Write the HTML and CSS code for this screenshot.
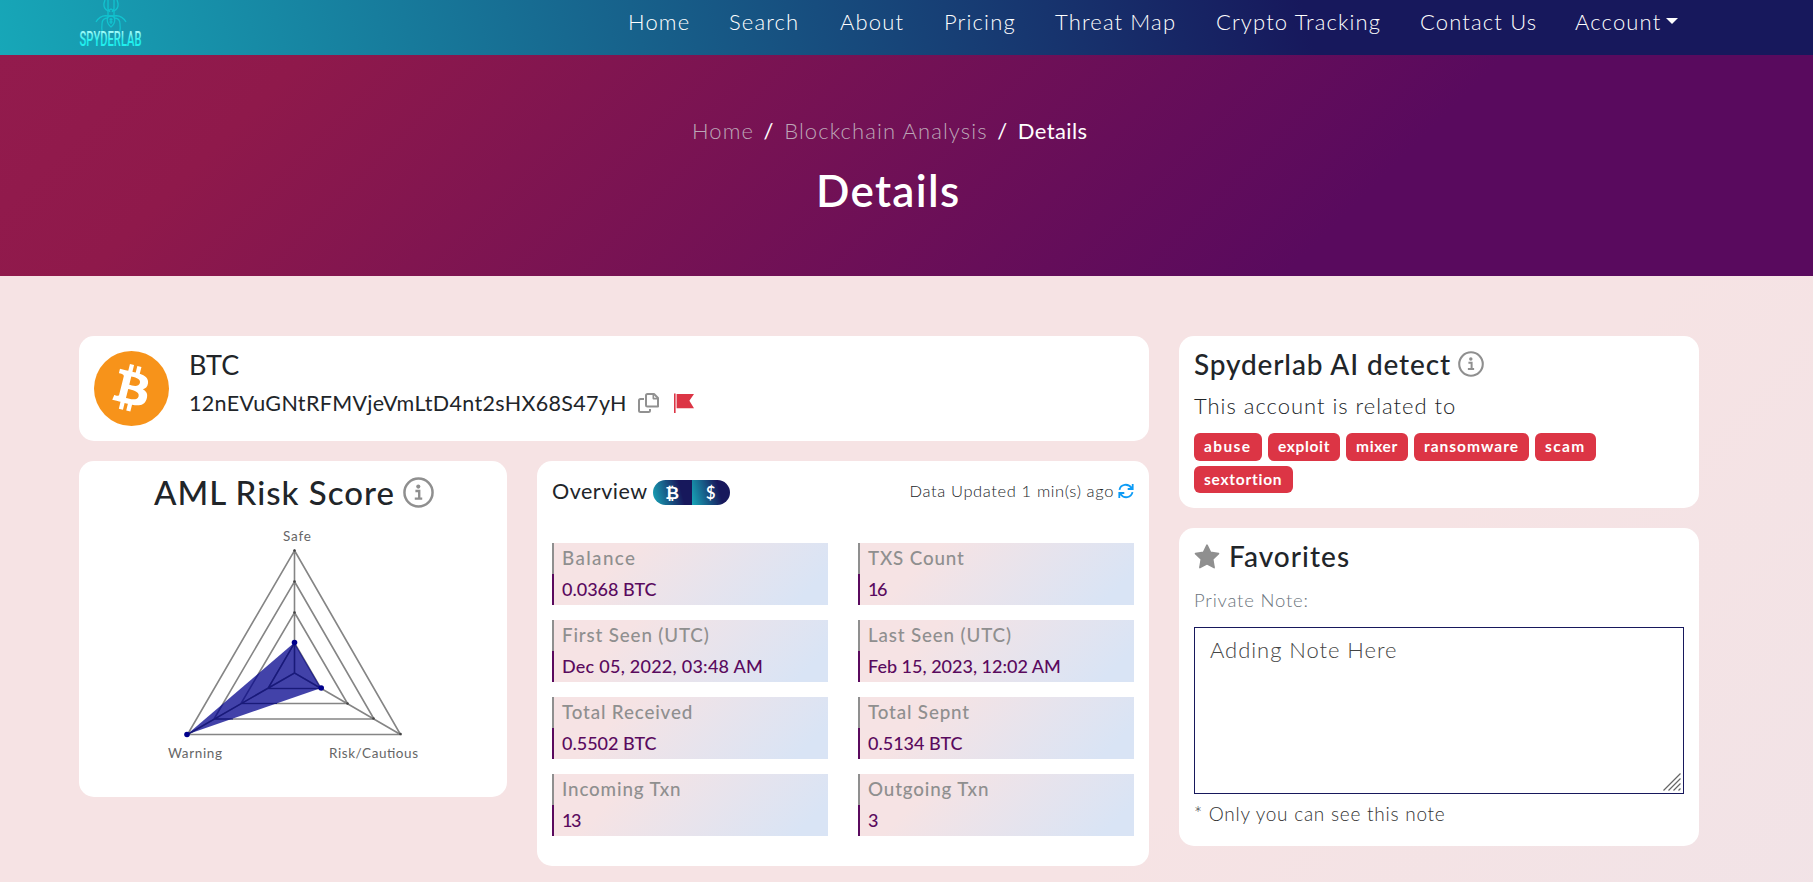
FILE: index.html
```html
<!DOCTYPE html>
<html lang="en">
<head>
<meta charset="utf-8">
<title>Details - Spyderlab</title>
<link rel="stylesheet" href="styles.css">
</head>
<body>
<svg class="sprite" aria-hidden="true">
  <symbol id="info" viewBox="0 0 30 30"><circle cx="15" cy="15" r="13.6" fill="none" stroke="currentColor" stroke-width="2.4"/><circle cx="14.8" cy="9.3" r="2" fill="currentColor"/><path d="M12 13.6h3.7v7M11.4 20.9h7.2" fill="none" stroke="currentColor" stroke-width="2.3"/></symbol>
</svg>
<header class="navbar">
  <a class="logo">
    <svg viewBox="0 0 68 55" width="68" height="55">
      <defs><linearGradient id="lg" x1="0" y1="0" x2="0" y2="1"><stop offset="0" stop-color="#e4ffff"/><stop offset=".6" stop-color="#1ff0ee"/></linearGradient></defs>
      <g fill="none" stroke="#12c3cf" stroke-width="1.3">
        <path d="M26 0c-2 5-1 9 3 11M38 0c2 5 1 9-3 11M29 0v9l2 3M35 0v9l-2 3M29 16c-5-1-9 1-12 6M35 16c5-1 9 1 12 6M29 18c-4 0-6 2-6 6s-1 6 1 9M35 18c4 0 6 2 6 6s1 6-1 9"/>
        <path d="M29 11l3-2 3 2v5h-6z"/><path d="M32 16c-5 0-5 7 0 11 5-4 5-11 0-11z"/><path d="M30.500 19.500h3M30.500 22h3M32 18v6"/>
      </g>
      <text class="logo-text" x="0.500" y="45.500" textLength="62" lengthAdjust="spacingAndGlyphs" fill="url(#lg)">SPYDERLAB</text>
    </svg>
  </a>
  <nav class="menu">
    <a class="n1">Home</a><a class="n2">Search</a><a class="n3">About</a><a class="n4">Pricing</a><a class="n5">Threat Map</a><a class="n6">Crypto Tracking</a><a class="n7">Contact Us</a><a class="n8">Account<i class="caret"></i></a>
  </nav>
</header>
<section class="hero">
  <div class="crumbs"><a>Home</a><span>/</span><a>Blockchain Analysis</a><span>/</span><b>Details</b></div>
  <h1>Details</h1>
</section>
<main class="container">
  <div class="left">
    <section class="card coin">
      <svg class="btc" viewBox="0 0 64 64"><circle cx="32" cy="32" r="32" fill="#f7931a"/><path fill="#fff" d="M46.103 27.444c.637-4.258-2.605-6.547-7.038-8.074l1.438-5.768-3.511-.875-1.400 5.616c-.923-.23-1.871-.447-2.813-.662l1.410-5.653-3.509-.875-1.439 5.766c-.764-.174-1.514-.346-2.242-.527l.004-.018-4.842-1.209-.934 3.750s2.605.597 2.550.634c1.422.355 1.679 1.296 1.636 2.042l-1.638 6.571c.098.025.225.061.365.117l-.371-.092-2.296 9.205c-.174.432-.615 1.080-1.609.834.035.051-2.552-.637-2.552-.637l-1.743 4.019 4.569 1.139c.850.213 1.683.436 2.503.646l-1.453 5.834 3.507.875 1.439-5.772c.958.260 1.888.500 2.798.726l-1.434 5.745 3.511.875 1.453-5.823c5.987 1.133 10.489.676 12.384-4.739 1.527-4.360-.076-6.875-3.226-8.515 2.294-.529 4.022-2.038 4.483-5.155zM38.081 38.693c-1.085 4.360-8.426 2.003-10.806 1.412l1.928-7.729c2.380.594 10.012 1.770 8.878 6.317zm1.086-11.312c-.990 3.966-7.100 1.951-9.082 1.457l1.748-7.010c1.982.494 8.365 1.416 7.334 5.553z"/></svg>
      <div class="coin-info">
        <h2 class="ticker">BTC</h2>
        <div class="address"><span class="hash">12nEVuGNtRFMVjeVmLtD4nt2sHX68S47yH</span>
          <svg class="copy" viewBox="0 0 21 20" width="21" height="20"><g fill="none" stroke="#919191" stroke-width="2" stroke-linejoin="round"><path d="M9.500 1h6.500l4 4v8.500H9.500a1.500 1.500 0 0 1-1.500-1.500V2.500A1.500 1.500 0 0 1 9.500 1z"/><path d="M15.300 1v4.600H20" stroke-width="1.600"/><path d="M6 6H2.500A1.500 1.500 0 0 0 1 7.500V17.500A1.500 1.500 0 0 0 2.500 19h8a1.500 1.500 0 0 0 1.500-1.500V16"/></g></svg>
          <svg class="flag" viewBox="0 0 20 20" width="20" height="20"><path fill="#dc3545" d="M0 .5h1.600V20H0zM2.600 1H20l-4.600 6.800L20 15.200H2.600z"/></svg>
        </div>
      </div>
    </section>
    <div class="columns">
      <section class="card risk">
        <h2 class="risk-title"><span>AML Risk Score</span><svg class="info-lg"><use href="#info"/></svg></h2>
        <svg class="radar" viewBox="0 0 300 250" width="300" height="250">
          <g fill="none" stroke="#858585" stroke-width="1.600">
            <path d="M151.500 24.500L257.500 208.500H44.500zM151.500 55.500L231 193H71zM151.500 86.500L204.500 177.500H98zM151.500 117L178 162.500H125zM151.500 147V24.500M151.500 147L257.500 208.500M151.500 147L44.500 208.500"/>
          </g>
          <path d="M151.500 116.500L178.200 162L44 208.500z" fill="#00008b" fill-opacity=".74"/>
          <path d="M151.500 117V147L178 162.500H125zM151.500 147L44.500 208.500M98 177.500h36M71 193h19" fill="none" stroke="#191a78" stroke-width="1.200"/>
          <g fill="#444"><circle cx="151.500" cy="24.500" r="1.300"/><circle cx="151.500" cy="55.500" r="1.300"/><circle cx="151.500" cy="86.500" r="1.300"/><circle cx="204.500" cy="177.500" r="1.300"/><circle cx="230.500" cy="192.500" r="1.300"/><circle cx="257.500" cy="208" r="1.300"/></g>
          <g fill="#00008b"><circle cx="151.500" cy="116.500" r="2.800"/><circle cx="178.200" cy="162" r="2.800"/><circle cx="44" cy="208.500" r="2.800"/></g>
          <g class="radar-label"><text x="140" y="15" textLength="28">Safe</text><text x="25" y="231.500" textLength="54">Warning</text><text x="186" y="231.500" textLength="89">Risk/Cautious</text></g>
        </svg>
      </section>
      <section class="card overview">
        <div class="overview-head">
          <h3>Overview</h3>
          <div class="toggle"><span>₿</span><span>$</span></div>
          <p class="updated">Data Updated 1 min(s) ago</p>
          <svg class="refresh" viewBox="0 0 16 16" width="16" height="16"><g fill="none" stroke="#0d9bf5" stroke-width="1.800"><path d="M1.500 6.800C2.500 1.200 10 -.2 13.600 5M14.700 1v5h-5M14.500 9.200C13.500 14.800 6 16.200 2.400 11M1.300 15v-5h5"/></g></svg>
        </div>
        <div class="tiles">
          <dl class="tile"><dt class="wide">Balance</dt><dd>0.0368 BTC</dd></dl>
          <dl class="tile"><dt>TXS Count</dt><dd class="tight">16</dd></dl>
          <dl class="tile"><dt>First Seen (UTC)</dt><dd class="date">Dec 05, 2022, 03:48 AM</dd></dl>
          <dl class="tile"><dt>Last Seen (UTC)</dt><dd>Feb 15, 2023, 12:02 AM</dd></dl>
          <dl class="tile"><dt>Total Received</dt><dd>0.5502 BTC</dd></dl>
          <dl class="tile"><dt>Total Sepnt</dt><dd>0.5134 BTC</dd></dl>
          <dl class="tile"><dt>Incoming Txn</dt><dd class="tight">13</dd></dl>
          <dl class="tile"><dt>Outgoing Txn</dt><dd>3</dd></dl>
        </div>
      </section>
    </div>
  </div>
  <aside class="right">
    <section class="card detect">
      <h2 class="side-title"><span class="detect-name">Spyderlab AI detect</span><svg class="info-md" viewBox="0 0 30 30"><use href="#info" width="30" height="30"/></svg></h2>
      <p class="related">This account is related to</p>
      <div class="badges"><span class="b1">abuse</span><span class="b2">exploit</span><span class="b3">mixer</span><span class="b4">ransomware</span><span class="b5">scam</span><span class="b6">sextortion</span></div>
    </section>
    <section class="card favorites">
      <h2 class="side-title"><svg class="star" viewBox="0 0 26 25" width="26" height="25"><path fill="#8f8f8f" stroke="#8f8f8f" stroke-width="1.600" stroke-linejoin="round" d="M13 1.200l3.500 7.200 8 1.200-5.800 5.600 1.400 8.400-7.100-3.700-7.100 3.700 1.400-8.400L1.500 9.600l8-1.200z"/></svg><span class="fav-name">Favorites</span></h2>
      <p class="private">Private Note:</p>
      <div class="note"><span>Adding Note Here</span><svg class="grip" viewBox="0 0 18 18" width="18" height="18"><path d="M.5 17.500L17.500.5M5.500 17.500l12-12M10.500 17.500l7-7M15.500 17.500l2-2" stroke="#666" stroke-width="1.200"/></svg></div>
      <p class="hint">* Only you can see this note</p>
    </section>
  </aside>
</main>
</body>
</html>
```
FILE: styles.css
```css
* { box-sizing: border-box; margin: 0; }
body {
  font-family: Lato, "Open Sans", sans-serif;
  font-weight: 300;
  font-variant-ligatures: none;
  color: #212529;
  min-height: 882px;
  overflow: hidden;
  background: linear-gradient(135deg, #f6e3e4 0, #f6e3e4 1380px, #d9e4f5 4900px);
}
h1, h2, h3, p, dl { font-weight: 400; }
.sprite { display: none; }
.navbar {
  height: 55px;
  padding-left: 79px;
  display: flex;
  align-items: flex-start;
  background: linear-gradient(75deg, #17a7b8 0, #17185c 72%);
}
.logo { width: 549px; height: 55px; }
.logo-text { font: 500 20px "Roboto", sans-serif; }
.menu { display: flex; color: #fff; font-size: 22px; line-height: 26px; padding-top: 9px; white-space: nowrap; }
.menu a { letter-spacing: 1.150px; }
.n1 { width: 101px; } .n2 { width: 111px; } .n3 { width: 104px; } .n4 { width: 111px; }
.n5 { width: 161px; } .n6 { width: 204px; } .n7 { width: 155px; }
.n8 { display: flex; align-items: center; gap: 5px; }
.caret { border: 6px solid transparent; border-top-color: #fff; border-bottom: 0; margin-top: -2px; }
.hero {
  height: 221px;
  padding-top: 63px;
  color: #fff;
  background: linear-gradient(135deg, #931b4d 0, #8f194b 15%, #590a5e 74%);
}
.crumbs { display: flex; margin-left: 692px; font-size: 22px; line-height: 26px; letter-spacing: 1.100px; }
.crumbs a { color: #bca6b7; }
.crumbs span { width: 30px; text-align: center; font-weight: 400; }
.crumbs b { font-weight: 400; letter-spacing: .4px; }
h1 { font-size: 44px; font-weight: 600; line-height: 52px; letter-spacing: 1.300px; margin: 20px 0 0 816px; }
.container { display: grid; grid-template-columns: 1070px 520px; gap: 30px; padding: 60px 0 0 79px; }
.left, .right { display: flex; flex-direction: column; gap: 20px; }
.card { background: #fff; border-radius: 15px; padding: 15px; }
.coin { height: 105px; display: flex; gap: 20px; }
.btc { width: 75px; height: 75px; }
.ticker { font-size: 27px; line-height: 30px; margin-top: -1px; }
.address { display: flex; align-items: center; margin-top: 10px; font-size: 21.5px; line-height: 26px; font-weight: 400; }
.hash { width: 449px; letter-spacing: .33px; }
.flag { margin-left: 15px; }
.columns { display: grid; grid-template-columns: 428px 612px; gap: 30px; align-items: start; }
.risk { height: 336px; display: flex; flex-direction: column; }
.risk-title { display: flex; align-items: center; gap: 8px; font-size: 33px; line-height: 34px; font-weight: 500; letter-spacing: 1px; margin: -1px 0 0 60px; }
.info-lg { width: 31px; height: 31px; color: #8f8f8f; }
.radar { margin: 17px 0 0 49px; }
.radar-label { font: 400 13.500px Lato, sans-serif; fill: #666; }
.overview { height: 405px; }
.overview-head { display: flex; align-items: center; height: 30px; }
.overview h3 { font-size: 21.5px; line-height: 30px; width: 101px; letter-spacing: .5px; }
.toggle { display: flex; border-radius: 13px; overflow: hidden; margin-top: 3px; }
.toggle span { width: 38.5px; height: 25px; line-height: 25px; text-align: center; color: #fff; font-size: 17px; font-weight: 600; background: linear-gradient(75deg, #17a7b8 0, #17185c 70%); }
.updated { margin: -1px 0 0 auto; font-size: 16.500px; font-weight: 300; letter-spacing: .62px; }
.refresh { margin-left: 4px; }
.tiles { display: grid; grid-template-columns: 276px 276px; gap: 15px 30px; margin-top: 37px; }
.tile { background: linear-gradient(135deg, #f6e3e4 25%, #d9e4f5 90%); font-size: 18px; line-height: 30px; font-weight: 500; }
.tile dt, .tile dd { height: 31px; padding-left: 8px; border-left: 2px solid #8f8f8f; }
.tile dt { color: #8f8f8f; font-size: 18.800px; letter-spacing: .85px; }
.tile .wide { letter-spacing: 1.400px; }
.tile dd { margin: 0; color: #5a0a5e; border-color: #5a0a5e; }
.tile .tight { letter-spacing: -1.500px; }
.tile .date { letter-spacing: .25px; }
.detect { height: 172px; }
.side-title { display: flex; align-items: center; font-size: 28px; line-height: 26px; font-weight: 500; letter-spacing: .85px; }
.info-md { width: 26px; height: 26px; margin-left: 7px; color: #8f8f8f; }
.related { font-size: 22px; font-weight: 300; line-height: 26px; letter-spacing: .98px; margin-top: 16px; }
.badges { display: flex; flex-wrap: wrap; gap: 5px 6px; width: 420px; margin-top: 14px; }
.badges span { height: 27.500px; line-height: 26px; padding-left: 10px; border-radius: 6px; background: #dc3545; color: #fff; font-size: 15.500px; font-weight: 700; letter-spacing: .75px; }
.badges .b1 { width: 68px; letter-spacing: 1.400px; }
.badges .b2 { width: 72px; letter-spacing: .65px; }
.badges .b3 { width: 62px; letter-spacing: .65px; }
.badges .b4 { width: 115px; letter-spacing: 1px; }
.badges .b5 { width: 61px; letter-spacing: 1.400px; }
.badges .b6 { width: 99px; }
.favorites { height: 318px; }
.fav-name { margin-left: 9px; letter-spacing: 1.050px; }
.private { font-size: 18.500px; font-weight: 300; line-height: 24px; letter-spacing: .8px; color: #6c757d; margin-top: 19px; }
.note { display: flex; justify-content: space-between; width: 490px; height: 167px; margin-top: 15px; padding: 9px 2px 2px 15px; border: 1px solid #17185c; font-size: 22px; line-height: 26px; letter-spacing: .95px; color: #444; }
.grip { align-self: flex-end; }
.hint { font-size: 19px; font-weight: 300; line-height: 24px; letter-spacing: .75px; color: #333; margin-top: 8px; }
```
